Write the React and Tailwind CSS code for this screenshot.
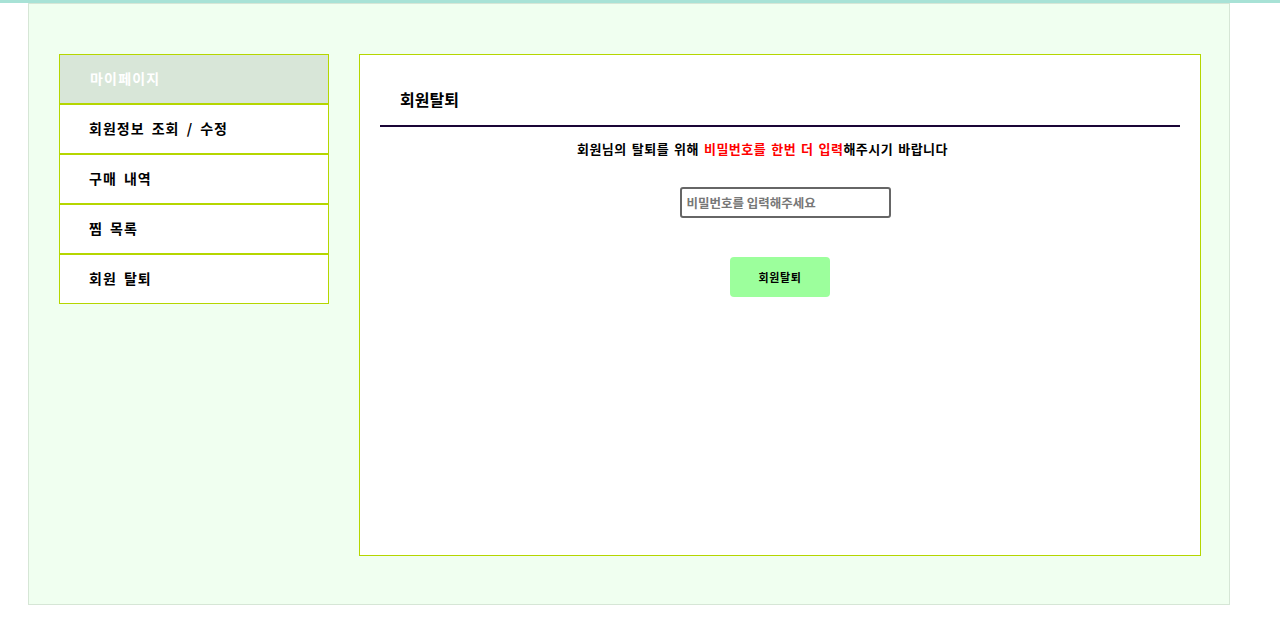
// 마이페이지 · 회원탈퇴 screen
const menu = ['회원정보 조회 / 수정', '구매 내역', '찜 목록', '회원 탈퇴']

const font = { fontFamily: '"Noto Sans CJK KR", "Noto Sans", sans-serif' }

export default function App() {
  return (
    <div className="min-h-[633px] bg-white" style={font}>
      <div className="h-[3px] bg-[#a8e2d6]" />
      <div className="ml-[28px] w-[1202px] h-[602px] bg-[#f0fff0] border border-[#d6e6d6] flex gap-[30px] pl-[30px] pr-[28px] pt-[50px]">
        {/* sidebar */}
        <div className="w-[270px] shrink-0 flex flex-col">
          <div className="h-[50px] border border-[#b5d600] bg-[#d8e6d8] flex items-center pl-[30px] pb-[2px] text-white text-[14px] font-bold tracking-[1.2px]">
            마이페이지
          </div>
          {menu.map(m => (
            <div
              key={m}
              className="h-[50px] border border-[#b5d600] bg-white flex items-center pl-[29px] pb-[2px] text-black text-[14px] font-bold tracking-[1px] [word-spacing:3px]"
            >
              {m}
            </div>
          ))}
        </div>

        {/* content */}
        <div className="flex-1 h-[502px] border border-[#b5d600] bg-white px-[20px]">
          <div className="pt-[34px] pb-[16px] pl-[20px] border-b-2 border-[#1a0536]">
            <h2 className="text-[16px] leading-[20px] font-bold text-black">회원탈퇴</h2>
          </div>
          <p className="mt-[12px] pr-[35px] text-center text-[13px] leading-[20px] font-bold text-black tracking-[0.5px] [word-spacing:1.5px]">
            회원님의 탈퇴를 위해 <span className="text-[#ff0000]">비밀번호를 한번 더 입력</span>해주시기 바랍니다
          </p>
          <div className="mt-[28px] flex justify-center">
            <input
              type="password"
              placeholder="비밀번호를 입력해주세요"
              className="ml-[10px] w-[211px] h-[31px] border-2 border-[#666666] rounded-[3px] px-[5px] text-[12.5px] font-bold placeholder:text-[#777777] outline-none"
              style={font}
            />
          </div>
          <div className="mt-[39px] flex justify-center">
            <button className="w-[100px] h-[40px] rounded-[4px] bg-[#9cff9c] text-black text-[11px] font-bold tracking-[0.6px]" style={font}>
              회원탈퇴
            </button>
          </div>
        </div>
      </div>
    </div>
  )
}
